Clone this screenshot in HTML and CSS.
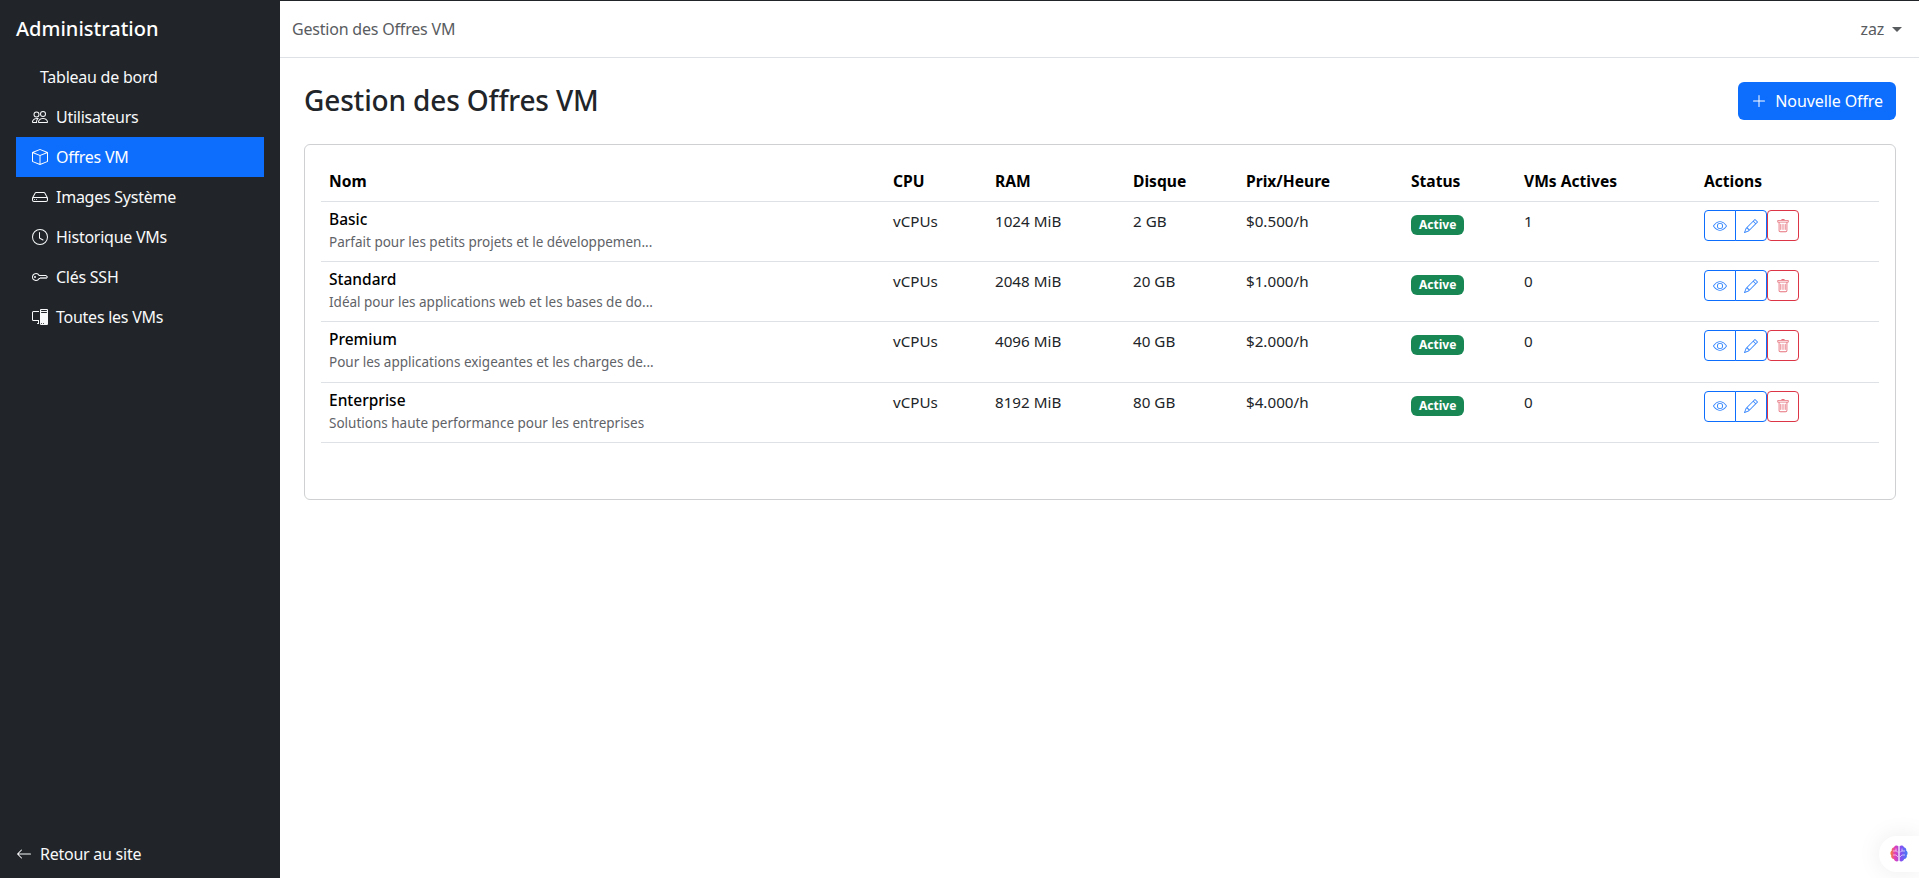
FILE: index.html
```html
<!DOCTYPE html>
<html lang="fr">
<head>
  <meta charset="UTF-8">
  <meta name="viewport" content="width=device-width, initial-scale=1.0">
  <title>Gestion des Offres VM</title>
  <link rel="stylesheet" href="styles.css">
</head>
<body>
  <svg class="sprite" xmlns="http://www.w3.org/2000/svg">
    <symbol id="i-people" viewBox="0 0 16 16"><path d="M15 14s1 0 1-1-1-4-5-4-5 3-5 4 1 1 1 1zm-7.978-1L7 12.996c.001-.264.167-1.03.76-1.72C8.312 10.629 9.282 10 11 10c1.717 0 2.687.63 3.24 1.276.593.69.758 1.457.76 1.72l-.008.002-.014.002zM11 7a2 2 0 1 0 0-4 2 2 0 0 0 0 4m3-2a3 3 0 1 1-6 0 3 3 0 0 1 6 0M6.936 9.28a6 6 0 0 0-1.23-.247A7 7 0 0 0 5 9c-4 0-5 3-5 4q0 1 1 1h4.216A2.24 2.24 0 0 1 5 13c0-1.01.377-2.042 1.09-2.904.243-.294.526-.569.846-.816M4.92 10A5.5 5.5 0 0 0 4 13H1c0-.26.164-1.03.76-1.724.545-.636 1.492-1.256 3.16-1.275ZM1.5 5.5a3 3 0 1 1 6 0 3 3 0 0 1-6 0m3-2a2 2 0 1 0 0 4 2 2 0 0 0 0-4"/></symbol>
    <symbol id="i-box" viewBox="0 0 16 16"><path d="M8.186 1.113a.5.5 0 0 0-.372 0L1.846 3.5 8 5.961 14.154 3.5zM15 4.239l-6.5 2.6v7.922l6.5-2.6V4.24zM7.5 14.762V6.838L1 4.239v7.925zM7.443.184a1.5 1.5 0 0 1 1.114 0l7.129 2.852A.5.5 0 0 1 16 3.5v8.662a1 1 0 0 1-.629.928l-7.185 2.874a.5.5 0 0 1-.372 0L.63 13.09a1 1 0 0 1-.63-.928V3.5a.5.5 0 0 1 .314-.464z"/></symbol>
    <symbol id="i-hdd" viewBox="0 0 16 16"><path d="M4.5 11a.5.5 0 1 0 0-1 .5.5 0 0 0 0 1M3 10.5a.5.5 0 1 1-1 0 .5.5 0 0 1 1 0"/><path d="M16 11a2 2 0 0 1-2 2H2a2 2 0 0 1-2-2V9.51c0-.418.105-.83.305-1.197l2.472-4.531A1.5 1.5 0 0 1 4.094 3h7.812a1.5 1.5 0 0 1 1.317.782l2.472 4.53c.2.368.305.78.305 1.198zM3.655 4.26 1.592 8.043Q1.79 8 2 8h12q.21 0 .408.042L12.345 4.26a.5.5 0 0 0-.439-.26H4.094a.5.5 0 0 0-.44.26zM1 10v1a1 1 0 0 0 1 1h12a1 1 0 0 0 1-1v-1a1 1 0 0 0-1-1H2a1 1 0 0 0-1 1"/></symbol>
    <symbol id="i-clock" viewBox="0 0 16 16"><path d="M8 3.5a.5.5 0 0 0-1 0V9a.5.5 0 0 0 .252.434l3.5 2a.5.5 0 0 0 .496-.868L8 8.71z"/><path d="M8 16A8 8 0 1 0 8 0a8 8 0 0 0 0 16m7-8A7 7 0 1 1 1 8a7 7 0 0 1 14 0"/></symbol>
    <symbol id="i-key" viewBox="0 0 16 16"><path d="M0 8a4 4 0 0 1 7.465-2H14a.5.5 0 0 1 .354.146l1.5 1.5a.5.5 0 0 1 0 .708l-1.5 1.5a.5.5 0 0 1-.708 0L13 9.207l-.646.647a.5.5 0 0 1-.708 0L11 9.207l-.646.647a.5.5 0 0 1-.708 0L9 9.207l-.646.647A.5.5 0 0 1 8 10h-.535A4 4 0 0 1 0 8m4-3a3 3 0 1 0 2.712 4.285A.5.5 0 0 1 7.163 9h.63l.853-.854a.5.5 0 0 1 .708 0l.646.647.646-.647a.5.5 0 0 1 .708 0l.646.647.646-.647a.5.5 0 0 1 .708 0l.646.647.793-.793-1-1h-6.63a.5.5 0 0 1-.451-.285A3 3 0 0 0 4 5"/><path d="M4 8a1 1 0 1 1-2 0 1 1 0 0 1 2 0"/></symbol>
    <symbol id="i-pc" viewBox="0 0 16 16"><path d="M8 1a1 1 0 0 1 1-1h6a1 1 0 0 1 1 1v14a1 1 0 0 1-1 1H9a1 1 0 0 1-1-1zm1 13.5a.5.5 0 1 0 1 0 .5.5 0 0 0-1 0m2 0a.5.5 0 1 0 1 0 .5.5 0 0 0-1 0M9.5 1a.5.5 0 0 0 0 1h5a.5.5 0 0 0 0-1zM9 3.5a.5.5 0 0 0 .5.5h5a.5.5 0 0 0 0-1h-5a.5.5 0 0 0-.5.5M1.5 2A1.5 1.5 0 0 0 0 3.5v7A1.5 1.5 0 0 0 1.5 12H6v2h-.5a.5.5 0 0 0 0 1H7v-4H1.5a.5.5 0 0 1-.5-.5v-7a.5.5 0 0 1 .5-.5H7V2z"/></symbol>
    <symbol id="i-arrow" viewBox="0 0 16 16"><path d="M15 8a.5.5 0 0 0-.5-.5H2.707l3.147-3.146a.5.5 0 1 0-.708-.708l-4 4a.5.5 0 0 0 0 .708l4 4a.5.5 0 0 0 .708-.708L2.707 8.5H14.5A.5.5 0 0 0 15 8"/></symbol>
    <symbol id="i-plus" viewBox="0 0 16 16"><path d="M8 2a.5.5 0 0 1 .5.5v5h5a.5.5 0 0 1 0 1h-5v5a.5.5 0 0 1-1 0v-5h-5a.5.5 0 0 1 0-1h5v-5A.5.5 0 0 1 8 2"/></symbol>
    <symbol id="i-eye" viewBox="0 0 16 16"><path d="M16 8s-3-5.5-8-5.5S0 8 0 8s3 5.5 8 5.5S16 8 16 8M1.173 8a13 13 0 0 1 1.66-2.043C4.12 4.668 5.88 3.5 8 3.5s3.879 1.168 5.168 2.457A13 13 0 0 1 14.828 8q-.086.13-.195.288c-.335.48-.83 1.12-1.465 1.755C11.879 11.332 10.119 12.5 8 12.5s-3.879-1.168-5.168-2.457A13 13 0 0 1 1.172 8z"/><path d="M8 5.5a2.5 2.5 0 1 0 0 5 2.5 2.5 0 0 0 0-5M4.5 8a3.5 3.5 0 1 1 7 0 3.5 3.5 0 0 1-7 0"/></symbol>
    <symbol id="i-pencil" viewBox="0 0 16 16"><path d="M12.146.146a.5.5 0 0 1 .708 0l3 3a.5.5 0 0 1 0 .708l-10 10a.5.5 0 0 1-.168.11l-5 2a.5.5 0 0 1-.65-.65l2-5a.5.5 0 0 1 .11-.168zM11.207 2.5 13.5 4.793 14.793 3.5 12.5 1.207zm1.586 3L10.5 3.207 4 9.707V10h.5a.5.5 0 0 1 .5.5v.5h.5a.5.5 0 0 1 .5.5v.5h.293zm-9.761 5.175-.106.106-1.528 3.821 3.821-1.528.106-.106A.5.5 0 0 1 5 12.5V12h-.5a.5.5 0 0 1-.5-.5V11h-.5a.5.5 0 0 1-.468-.325"/></symbol>
    <symbol id="i-trash" viewBox="0 0 16 16"><path d="M5.5 5.5A.5.5 0 0 1 6 6v6a.5.5 0 0 1-1 0V6a.5.5 0 0 1 .5-.5m2.5 0a.5.5 0 0 1 .5.5v6a.5.5 0 0 1-1 0V6a.5.5 0 0 1 .5-.5m3 .5a.5.5 0 0 0-1 0v6a.5.5 0 0 0 1 0z"/><path d="M14.5 3a1 1 0 0 1-1 1H13v9a2 2 0 0 1-2 2H5a2 2 0 0 1-2-2V4h-.5a1 1 0 0 1-1-1V2a1 1 0 0 1 1-1H6a1 1 0 0 1 1-1h2a1 1 0 0 1 1 1h3.5a1 1 0 0 1 1 1zM4.118 4 4 4.059V13a1 1 0 0 0 1 1h6a1 1 0 0 0 1-1V4.059L11.882 4zM2.500 3h11V2h-11z"/></symbol>
  </svg>

  <div class="container">
    <aside class="sidebar">
      <div class="logo">Administration</div>
      <nav>
        <ul>
          <li><a href="#"><span class="no-icon"></span>Tableau de bord</a></li>
          <li><a href="#"><svg class="icon"><use href="#i-people"/></svg>Utilisateurs</a></li>
          <li><a href="#" class="active"><svg class="icon"><use href="#i-box"/></svg>Offres VM</a></li>
          <li><a href="#"><svg class="icon"><use href="#i-hdd"/></svg>Images Système</a></li>
          <li><a href="#"><svg class="icon"><use href="#i-clock"/></svg>Historique VMs</a></li>
          <li><a href="#"><svg class="icon"><use href="#i-key"/></svg>Clés SSH</a></li>
          <li><a href="#"><svg class="icon"><use href="#i-pc"/></svg>Toutes les VMs</a></li>
        </ul>
      </nav>
      <a href="#" class="back-link"><svg class="icon"><use href="#i-arrow"/></svg>Retour au site</a>
    </aside>

    <div class="content">
      <header class="topbar">
        <span class="topbar-title">Gestion des Offres VM</span>
        <span class="user-menu">zaz<span class="caret"></span></span>
      </header>

      <main>
        <div class="page-head">
          <h1 class="page-title">Gestion des Offres VM</h1>
          <button class="btn-new"><svg class="icon"><use href="#i-plus"/></svg>Nouvelle Offre</button>
        </div>

        <div class="card">
          <table class="offers">
            <colgroup>
              <col class="col-name"><col class="col-cpu"><col class="col-ram"><col class="col-disk">
              <col class="col-price"><col class="col-status"><col class="col-vms"><col class="col-actions">
            </colgroup>
            <thead>
              <tr>
                <th>Nom</th><th>CPU</th><th>RAM</th><th>Disque</th><th>Prix/Heure</th><th>Status</th><th>VMs Actives</th><th>Actions</th>
              </tr>
            </thead>
            <tbody>
              <tr>
                <td><strong>Basic</strong><small>Parfait pour les petits projets et le développemen...</small></td>
                <td>vCPUs</td><td>1024 MiB</td><td>2 GB</td><td>$0.500/h</td>
                <td><span class="badge">Active</span></td><td>1</td>
                <td><div class="actions"><div class="btn-group"><button class="btn-blue"><svg class="icon-sm"><use href="#i-eye"/></svg></button><button class="btn-blue"><svg class="icon-sm"><use href="#i-pencil"/></svg></button></div><button class="btn-red"><svg class="icon-sm"><use href="#i-trash"/></svg></button></div></td>
              </tr>
              <tr>
                <td><strong>Standard</strong><small>Idéal pour les applications web et les bases de do...</small></td>
                <td>vCPUs</td><td>2048 MiB</td><td>20 GB</td><td>$1.000/h</td>
                <td><span class="badge">Active</span></td><td>0</td>
                <td><div class="actions"><div class="btn-group"><button class="btn-blue"><svg class="icon-sm"><use href="#i-eye"/></svg></button><button class="btn-blue"><svg class="icon-sm"><use href="#i-pencil"/></svg></button></div><button class="btn-red"><svg class="icon-sm"><use href="#i-trash"/></svg></button></div></td>
              </tr>
              <tr>
                <td><strong>Premium</strong><small>Pour les applications exigeantes et les charges de...</small></td>
                <td>vCPUs</td><td>4096 MiB</td><td>40 GB</td><td>$2.000/h</td>
                <td><span class="badge">Active</span></td><td>0</td>
                <td><div class="actions"><div class="btn-group"><button class="btn-blue"><svg class="icon-sm"><use href="#i-eye"/></svg></button><button class="btn-blue"><svg class="icon-sm"><use href="#i-pencil"/></svg></button></div><button class="btn-red"><svg class="icon-sm"><use href="#i-trash"/></svg></button></div></td>
              </tr>
              <tr>
                <td><strong>Enterprise</strong><small>Solutions haute performance pour les entreprises</small></td>
                <td>vCPUs</td><td>8192 MiB</td><td>80 GB</td><td>$4.000/h</td>
                <td><span class="badge">Active</span></td><td>0</td>
                <td><div class="actions"><div class="btn-group"><button class="btn-blue"><svg class="icon-sm"><use href="#i-eye"/></svg></button><button class="btn-blue"><svg class="icon-sm"><use href="#i-pencil"/></svg></button></div><button class="btn-red"><svg class="icon-sm"><use href="#i-trash"/></svg></button></div></td>
              </tr>
            </tbody>
          </table>
        </div>
      </main>
    </div>
  </div>

  <!-- floating widget, sits over the page -->
  <div class="brain-widget">
    <svg width="20" height="20" viewBox="0 0 20 20">
      <defs>
        <linearGradient id="brain-grad" x1="0" y1="0" x2="1" y2="0">
          <stop offset="0" stop-color="#f5872e"/><stop offset="0.25" stop-color="#e63fb4"/><stop offset="0.6" stop-color="#8a4df0"/><stop offset="1" stop-color="#3f7ff5"/>
        </linearGradient>
      </defs>
      <path fill="url(#brain-grad)" d="M9.4 2.2C8 .9 5.6 1.4 5 3.200 3.300 3.400 2.300 5 2.800 6.500 1.200 7.600 .9 10 2.200 11.300 1.700 13.200 3 15 4.800 15.100 5.500 17.400 8.200 18.200 9.400 16.800zM10.600 2.200C12 .9 14.400 1.400 15 3.200 16.700 3.400 17.700 5 17.200 6.500 18.800 7.600 19.100 10 17.800 11.300 18.300 13.200 17 15 15.200 15.100 14.500 17.400 11.800 18.200 10.600 16.800z"/>
      <path fill="none" stroke="#fff" stroke-width=".8" opacity=".75" d="M4 7h3.500l1.500 1.500M4 11h3l2 2M7 4.500v2.500M16 7h-3.500L11 8.500M16 11h-3l-2 2M13 4.500v2.500"/>
    </svg>
  </div>
</body>
</html>
```

FILE: styles.css
```css
* {
  box-sizing: border-box;
}

body {
  font-family: "Noto Sans", sans-serif;
  font-size: 16px;
  line-height: 1.5;
  margin: 0;
  padding: 0;
  background-color: #ffffff;
  color: #212529;
  height: 100vh;
  overflow: hidden;
  border-top: 1px solid #212529;
}

.sprite {
  display: none;
}

.container {
  display: flex;
  height: 100%;
}

.icon {
  width: 16px;
  height: 16px;
  fill: currentColor;
  flex-shrink: 0;
}

.icon-sm {
  width: 14px;
  height: 14px;
  fill: currentColor;
  display: block;
}

/* sidebar */
.sidebar {
  background-color: #212529;
  color: #f8f9fa;
  width: 280px;
  flex-shrink: 0;
  padding: 0 16px;
  display: flex;
  flex-direction: column;
  letter-spacing: -0.25px;
}

.logo {
  font-size: 20px;
  font-weight: 500;
  color: #ffffff;
  padding-top: 13px;
  height: 56px;
  letter-spacing: 0;
}

nav {
  flex-grow: 1;
}

nav ul {
  list-style: none;
  padding: 0;
  margin: 0;
}

nav ul li a {
  color: #f8f9fa;
  text-decoration: none;
  display: flex;
  align-items: center;
  gap: 8px;
  height: 40px;
  padding: 0 16px;
}

nav ul li a.active {
  background-color: #0d6efd;
  color: #ffffff;
}

.no-icon {
  width: 8px;
  margin-right: -8px;
}

.back-link {
  color: #f8f9fa;
  text-decoration: none;
  display: flex;
  align-items: center;
  gap: 8px;
  height: 24px;
  margin-bottom: 12px;
}

/* top bar */
.content {
  flex-grow: 1;
  min-width: 0;
}

.topbar {
  display: flex;
  justify-content: space-between;
  align-items: center;
  height: 57px;
  padding: 0 17px 0 12px;
  border-bottom: 1px solid #dee2e6;
  color: #595c5f;
  letter-spacing: -0.2px;
}

.user-menu {
  display: flex;
  align-items: center;
}

.caret {
  width: 0;
  height: 0;
  margin-left: 8px;
  border-top: 5px solid #595c5f;
  border-left: 5px solid transparent;
  border-right: 5px solid transparent;
}

/* main */
main {
  padding: 24px 23px 24px 24px;
}

.page-head {
  display: flex;
  justify-content: space-between;
  align-items: center;
  height: 38px;
  margin-bottom: 24px;
}

.page-title {
  font-size: 28px;
  font-weight: 500;
  line-height: 1.2;
  margin: 0;
  letter-spacing: -0.15px;
}

.btn-new {
  background-color: #0d6efd;
  color: #ffffff;
  font-family: inherit;
  font-size: 16px;
  height: 38px;
  padding: 0 13px;
  border: none;
  border-radius: 6px;
  display: flex;
  align-items: center;
  gap: 8px;
  cursor: pointer;
  letter-spacing: -0.1px;
}

.card {
  border: 1px solid #ced0d2;
  border-radius: 6px;
  padding: 16px 16px 56px;
}

.offers {
  width: 100%;
  table-layout: fixed;
  border-collapse: collapse;
  font-size: 15.2px;
  color: #212529;
}

.col-name { width: 564px; }
.col-cpu { width: 102px; }
.col-ram { width: 138px; }
.col-disk { width: 113px; }
.col-price { width: 165px; }
.col-status { width: 113px; }
.col-vms { width: 180px; }

.offers th {
  font-size: 15.6px;
  font-weight: 700;
  line-height: 24px;
  color: #000000;
  text-align: left;
  padding: 8px;
  border-bottom: 1px solid #dee2e6;
}

.offers td {
  padding: 8px;
  height: 60.2px;
  vertical-align: top;
  border-bottom: 1px solid #dee2e6;
}

.offers td strong {
  display: block;
  font-size: 15.5px;
  font-weight: 500;
  line-height: 20px;
  margin-top: -1px;
  color: #000000;
}

.offers td small {
  display: block;
  font-size: 13.5px;
  line-height: 20px;
  margin-top: 3px;
  color: #5f6368;
  white-space: nowrap;
}

.badge {
  display: inline-block;
  background-color: #198754;
  color: #ffffff;
  font-size: 12px;
  font-weight: 700;
  line-height: 1;
  padding: 4px 8px;
  border-radius: 6px;
  margin-top: 5px;
  vertical-align: top;
}

.actions {
  display: flex;
}

.btn-group {
  display: flex;
}

.actions button {
  width: 32px;
  height: 31px;
  padding: 0;
  background: #ffffff;
  display: flex;
  align-items: center;
  justify-content: center;
  cursor: pointer;
}

.btn-blue {
  border: 1px solid #0d6efd;
  color: #0d6efd;
}

.btn-blue svg {
  opacity: 0.85;
}

.btn-blue:first-child {
  border-radius: 4px 0 0 4px;
}

.btn-blue:last-child {
  border-radius: 0 4px 4px 0;
  margin-left: -1px;
}

.actions .btn-red {
  border: 1px solid #dc3545;
  border-radius: 4px;
  color: #dc3545;
}

.btn-red svg {
  opacity: 0.7;
}

/* floating widget */
.brain-widget {
  position: fixed;
  right: 0;
  bottom: 6px;
  width: 40px;
  height: 36px;
  background-color: #ffffff;
  border-radius: 18px 0 0 18px;
  box-shadow: 0 0 24px rgba(0, 0, 0, 0.08);
  display: flex;
  align-items: center;
  padding-left: 10px;
}
```
